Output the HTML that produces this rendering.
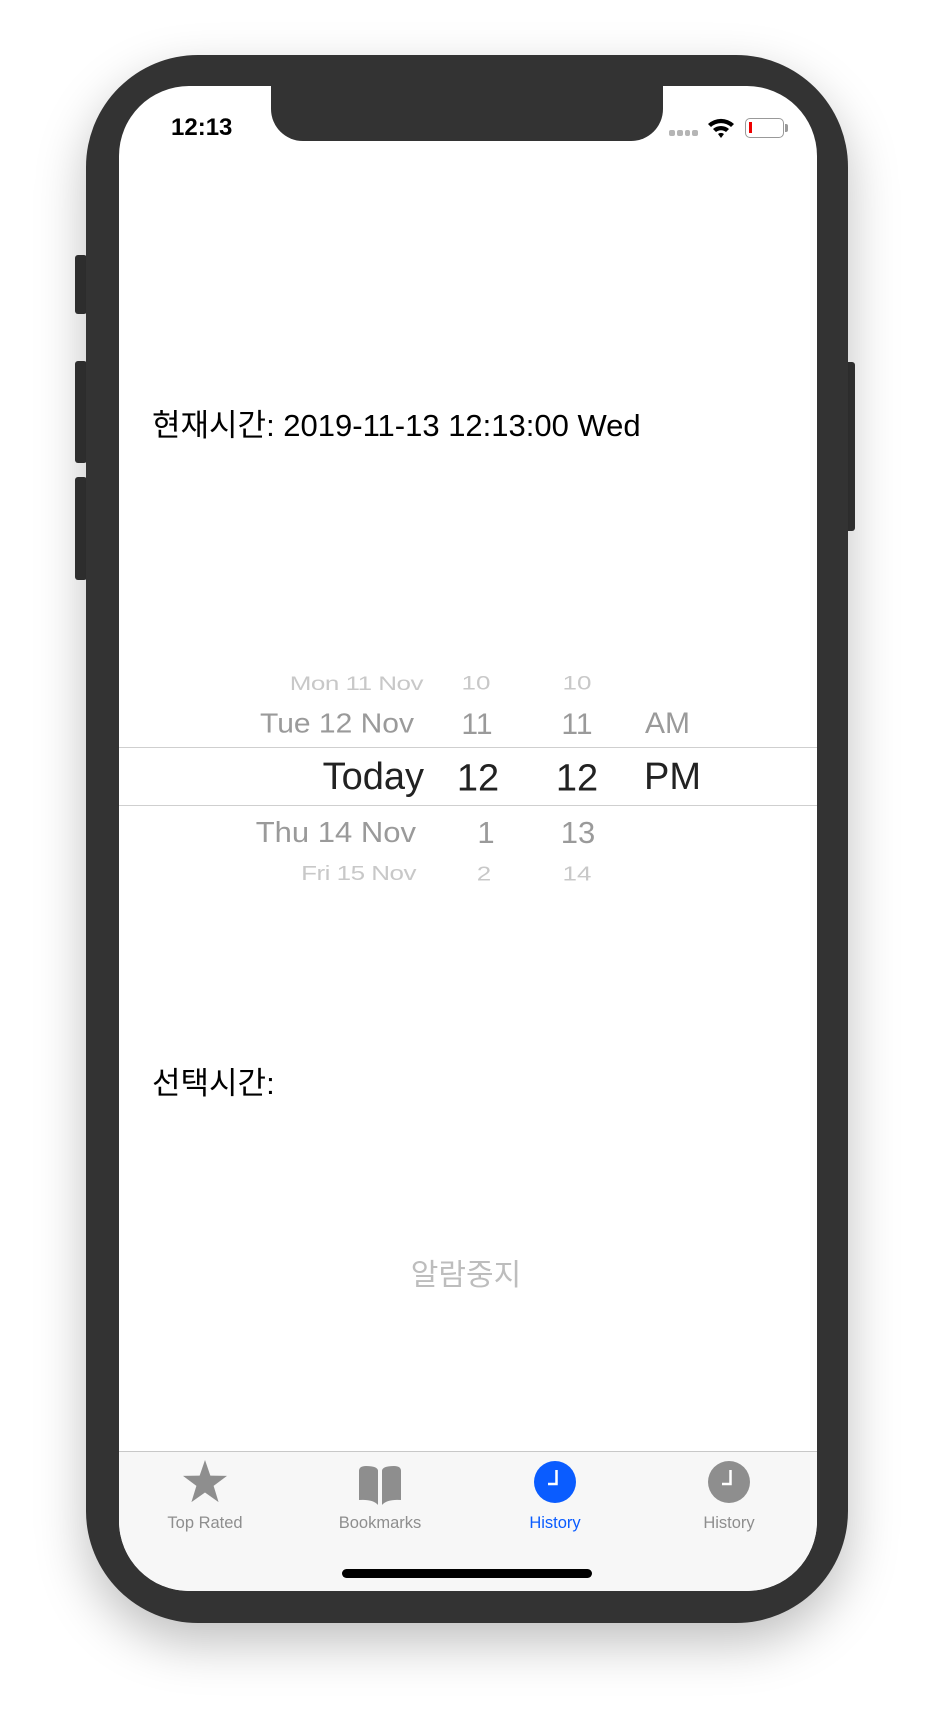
<!DOCTYPE html>
<html><head><meta charset="utf-8"><style>
*{margin:0;padding:0;box-sizing:border-box}
body{width:930px;height:1710px;background:#fff;position:relative;overflow:hidden;font-family:"Liberation Sans","Noto Sans CJK KR",sans-serif}
.phone{position:absolute;left:86px;top:55px;width:762px;height:1568px;background:#333;border-radius:112px;box-shadow:0 20px 50px rgba(0,0,0,.25)}
.screen{position:absolute;left:119px;top:86px;width:698px;height:1505px;background:#fff;border-radius:70px;overflow:hidden}
.notch{position:absolute;left:152px;top:0;width:392px;height:55px;background:#333;border-radius:0 0 32px 32px}
.btn{position:absolute;background:#333;border-radius:3px}
.abs{position:absolute;white-space:nowrap}
.tab{position:absolute;top:1451px;left:119px;width:698px;height:140px;background:#f7f7f7;border-top:1px solid #c8c8c8;border-radius:0 0 70px 70px}
.lbl{position:absolute;top:1514px;font-size:16.5px;color:#8e8e8e;transform:translateX(-50%)}
.p{position:absolute;transform:translate(-50%,-50%);white-space:nowrap}
</style></head><body>
<div class="btn" style="left:75px;top:255px;width:12px;height:59px"></div>
<div class="btn" style="left:75px;top:361px;width:12px;height:102px"></div>
<div class="btn" style="left:75px;top:477px;width:12px;height:103px"></div>
<div class="btn" style="left:843px;top:362px;width:12px;height:169px"></div>
<div class="phone"></div>
<div class="screen">
<div class="notch"></div>
</div>
<div class="abs" style="left:171px;top:114px;font-size:24px;font-weight:bold;color:#000">12:13</div>
<div class="abs" style="left:669px;top:130px;width:29px;height:6px;display:flex;gap:2px"><i style="flex:1;background:#b5b5b5;border-radius:2px"></i><i style="flex:1;background:#b5b5b5;border-radius:2px"></i><i style="flex:1;background:#b5b5b5;border-radius:2px"></i><i style="flex:1;background:#b5b5b5;border-radius:2px"></i></div>
<svg class="abs" style="left:707px;top:117px" width="28" height="22" viewBox="0 0 28 22"><path d="M1 7 A19 19 0 0 1 27 7 L24 10 A15 15 0 0 0 4 10Z M6 12 A12 12 0 0 1 22 12 L19 15 A8 8 0 0 0 9 15Z M11 17 A5 5 0 0 1 17 17 L14 21Z" fill="#000"/></svg>
<div class="abs" style="left:745px;top:118px;width:39px;height:20px;border:1.5px solid #999;border-radius:5px"><div style="position:absolute;left:3px;top:3px;width:3px;height:11px;background:#e00"></div></div>
<div class="abs" style="left:785px;top:124px;width:3px;height:8px;background:#999;border-radius:0 2px 2px 0"></div>

<div class="abs" style="left:152px;top:407px;font-size:31px;color:#000;line-height:38px">현재시간: 2019-11-13 12:13:00 Wed</div>

<div class="abs" style="left:119px;top:747px;width:698px;height:1px;background:#cfcfcf"></div>
<div class="abs" style="left:119px;top:805px;width:698px;height:1px;background:#cfcfcf"></div>

<div class="abs" style="right:507px;top:668px;font-size:26px;color:#c8c8c8;transform:scaleY(.75);transform-origin:right center;letter-spacing:-0.5px">Mon 11 Nov</div>
<div class="p" style="left:476px;top:683px;font-size:26px;color:#c8c8c8;transform:translate(-50%,-50%) scaleY(.75)">10</div>
<div class="p" style="left:577px;top:683px;font-size:26px;color:#c8c8c8;transform:translate(-50%,-50%) scaleY(.75)">10</div>

<div class="abs" style="right:516px;top:707px;font-size:30px;color:#9a9a9a;transform:scaleY(.92);transform-origin:right center">Tue 12 Nov</div>
<div class="p" style="left:477px;top:725px;font-size:30px;color:#9a9a9a">11</div>
<div class="p" style="left:577px;top:725px;font-size:30px;color:#9a9a9a">11</div>
<div class="abs" style="left:645px;top:707px;font-size:30px;color:#9a9a9a">AM</div>

<div class="abs" style="right:506px;top:756px;font-size:38px;color:#222">Today</div>
<div class="p" style="left:478px;top:779px;font-size:38px;color:#222">12</div>
<div class="p" style="left:577px;top:779px;font-size:38px;color:#222">12</div>
<div class="abs" style="left:644px;top:756px;font-size:38px;color:#222">PM</div>

<div class="abs" style="right:514px;top:815px;font-size:31px;color:#9a9a9a;transform:scaleY(.92);transform-origin:right center">Thu 14 Nov</div>
<div class="p" style="left:486px;top:833px;font-size:31px;color:#9a9a9a">1</div>
<div class="p" style="left:578px;top:833px;font-size:31px;color:#9a9a9a">13</div>

<div class="abs" style="right:514px;top:858px;font-size:26px;color:#c8c8c8;transform:scaleY(.78);transform-origin:right center;letter-spacing:-0.5px">Fri 15 Nov</div>
<div class="p" style="left:484px;top:874px;font-size:26px;color:#c8c8c8;transform:translate(-50%,-50%) scaleY(.78)">2</div>
<div class="p" style="left:577px;top:874px;font-size:26px;color:#c8c8c8;transform:translate(-50%,-50%) scaleY(.78)">14</div>

<div class="abs" style="left:152px;top:1065px;font-size:31px;color:#000;line-height:38px">선택시간:</div>
<div class="p" style="left:466px;top:1272px;font-size:30px;color:#bdbdbd">알람중지</div>

<div class="tab"></div>
<svg class="abs" style="left:182px;top:1460px" width="46" height="44" viewBox="0 0 24 23"><path d="M12 0 L14.8 8.2 L23.5 8.3 L16.5 13.5 L19.1 22 L12 17 L4.9 22 L7.5 13.5 L0.5 8.3 L9.2 8.2Z" fill="#8e8e8e"/></svg>
<svg class="abs" style="left:357px;top:1465px" width="46" height="40" viewBox="0 0 46 40"><path d="M2 6 Q2 1 9 1 Q21 1 21 6 L21 40 Q16 34 2 35Z M25 6 Q25 1 37 1 Q44 1 44 6 L44 35 Q30 34 25 40Z" fill="#8e8e8e"/></svg>
<svg class="abs" style="left:534px;top:1461px" width="42" height="42" viewBox="0 0 42 42"><circle cx="21" cy="21" r="21" fill="#0a5cff"/><path d="M22.5 9 V23 H14" stroke="#fff" stroke-width="2.5" fill="none"/></svg>
<svg class="abs" style="left:708px;top:1461px" width="42" height="42" viewBox="0 0 42 42"><circle cx="21" cy="21" r="21" fill="#8e8e8e"/><path d="M22.5 9 V23 H14" stroke="#fff" stroke-width="2.5" fill="none"/></svg>
<div class="lbl" style="left:205px">Top Rated</div>
<div class="lbl" style="left:380px">Bookmarks</div>
<div class="lbl" style="left:555px;color:#0a5cff">History</div>
<div class="lbl" style="left:729px">History</div>
<div class="abs" style="left:342px;top:1569px;width:250px;height:9px;background:#000;border-radius:5px"></div>
</body></html>
